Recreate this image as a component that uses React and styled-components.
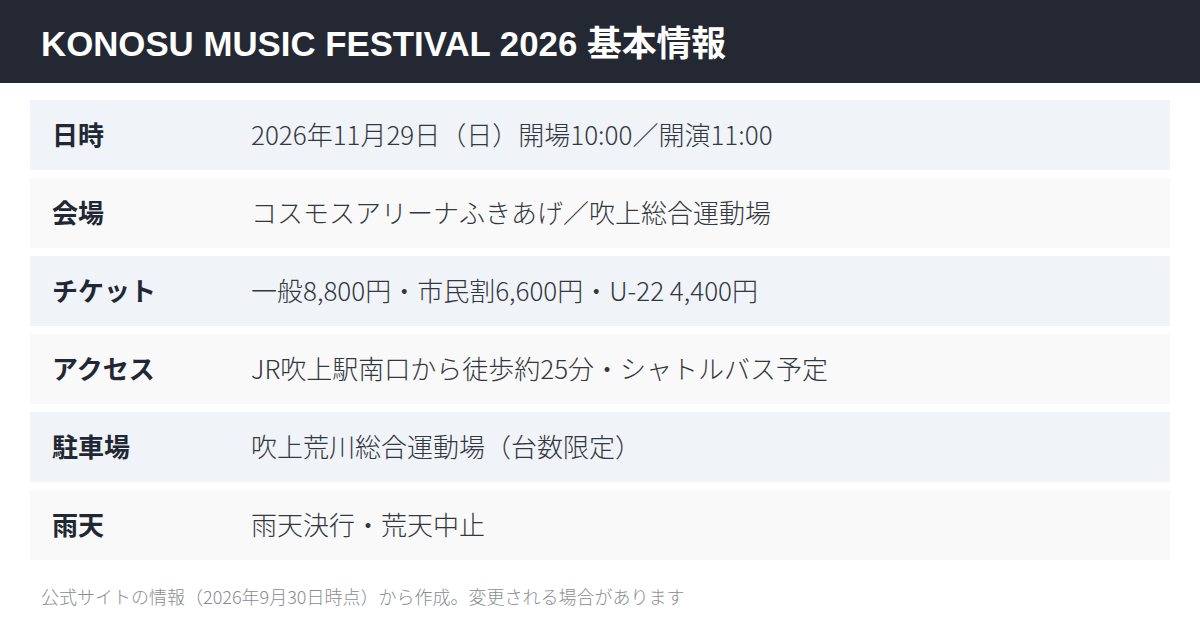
import React from "react";
import styled, { createGlobalStyle } from "styled-components";

const rows = [
  { label: "日時", value: "2026年11月29日（日）開場10:00／開演11:00" },
  { label: "会場", value: "コスモスアリーナふきあげ／吹上総合運動場" },
  { label: "チケット", value: "一般8,800円・市民割6,600円・U-22 4,400円" },
  { label: "アクセス", value: "JR吹上駅南口から徒歩約25分・シャトルバス予定" },
  { label: "駐車場", value: "吹上荒川総合運動場（台数限定）" },
  { label: "雨天", value: "雨天決行・荒天中止" },
];

const GlobalStyle = createGlobalStyle`
  body {
    margin: 0;
    background: #fff;
    font-family: "Noto Sans CJK JP", sans-serif;
  }
`;

const Page = styled("div")`
  width: 1200px;
  height: 618px;
  overflow: hidden;
  display: flex;
  flex-direction: column;
`;

const Header = styled("header")`
  height: 83px;
  background: #232833;
  display: flex;
  align-items: center;
  padding: 0 0 2px 41px;
  box-sizing: border-box;
`;

const Title = styled("h1")`
  margin: 0;
  color: #fff;
  font-family: "Liberation Sans", "Noto Sans CJK JP", sans-serif;
  font-size: 34.8px;
  font-weight: 700;
`;

const Table = styled("div")`
  display: flex;
  flex-direction: column;
  gap: 8px;
  margin: 17px 30px 0;
`;

const Row = styled("div")`
  height: 70px;
  display: grid;
  grid-template-columns: 199px 1fr;
  align-items: center;
  padding: 0 0 4px 22px;
  box-sizing: border-box;
  background: ${(p) => (p.$odd ? "#f0f3f8" : "#f9f9f9")};
`;

const Label = styled("div")`
  font-size: 26px;
  font-weight: 700;
  color: #222833;
`;

const Value = styled("div")`
  font-size: 26px;
  font-weight: 300;
  color: #33383f;
`;

const Note = styled("p")`
  margin: 23px 0 0 41px;
  font-size: 18px;
  font-weight: 300;
  color: #8a8d92;
`;

export default function App() {
  return (
    <Page>
      <GlobalStyle />
      <Header>
        <Title>KONOSU MUSIC FESTIVAL 2026 基本情報</Title>
      </Header>
      <Table>
        {rows.map((r, i) => (
          <Row key={r.label} $odd={i % 2 === 0}>
            <Label>{r.label}</Label>
            <Value>{r.value}</Value>
          </Row>
        ))}
      </Table>
      <Note>公式サイトの情報（2026年9月30日時点）から作成。変更される場合があります</Note>
    </Page>
  );
}
